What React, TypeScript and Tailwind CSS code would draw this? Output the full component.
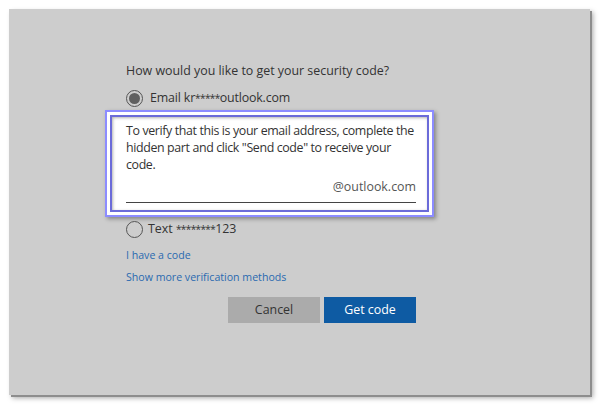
import React from 'react';

const font = { fontFamily: '"Open Sans", "Noto Sans", sans-serif' };

const Radio: React.FC<{ checked?: boolean }> = ({ checked }) => (
  <span className="flex h-[17px] w-[17px] shrink-0 items-center justify-center rounded-full border border-[#555] bg-[#cdcdcd]">
    {checked && <span className="h-[11px] w-[11px] rounded-full bg-[#606060]" />}
  </span>
);

const Stars: React.FC<{ n: number }> = ({ n }) => (
  <span className="text-[10px] tracking-[-0.6px]">{'*'.repeat(n)}</span>
);

export default function App() {
  return (
    <div className="h-[406px] w-[600px] bg-white pt-[9px] pl-[9px] pr-[10px] pb-[11px]" style={font}>
      <div className="h-full bg-[#cdcdcd] pl-[117px] pt-[53px] shadow-[2px_2px_0_#8d8d8d,3px_3px_5px_rgba(0,0,0,0.35)]">
        <div className="w-[290px] text-[12.4px] text-[#333]">
          <p className="leading-[18px]">How would you like to get your security code?</p>

          <label className="mt-[9px] flex items-center gap-[7px] leading-[18px]">
            <Radio checked />
            <span className="tracking-[-0.15px]">
              Email kr<Stars n={5} />outlook.com
            </span>
          </label>

          <div className="-ml-[21px] -mr-[18px] mt-[3px] border-2 border-[#8c8cff] bg-white p-[3px] shadow-[2px_2px_4px_rgba(0,0,0,0.35)]">
            <div className="border-2 border-[#6b6bd9] bg-white pl-[14px] pr-[11px] pt-[5px] pb-[7px] shadow-[inset_1px_1px_3px_rgba(0,0,0,0.3)]">
              <p className="whitespace-nowrap leading-[17px] tracking-[-0.37px]">
                To verify that this is your email address, complete the
                <br />
                hidden part and click "Send code" to receive your
                <br />
                code.
              </p>
              <div className="mt-[5px] border-b border-[#444] pb-[7px] text-right leading-[17px] text-[#555]">
                @outlook.com
              </div>
            </div>
          </div>

          <label className="mt-[3px] flex items-center gap-[5px] leading-[18px]">
            <Radio />
            <span>
              Text <Stars n={8} />123
            </span>
          </label>

          <a className="mt-[8px] block text-[10.6px] leading-[18px] text-[#2a6ab0]">I have a code</a>
          <a className="mt-[4px] block text-[10.6px] leading-[18px] text-[#2a6ab0]">Show more verification methods</a>

          <div className="mt-[11px] flex justify-end gap-[4px]">
            <button className="h-[26px] w-[92px] bg-[#ababab] text-[12.4px] text-[#333]">Cancel</button>
            <button className="h-[26px] w-[92px] bg-[#0e5ba3] text-[12.4px] text-white">Get code</button>
          </div>
        </div>
      </div>
    </div>
  );
}
